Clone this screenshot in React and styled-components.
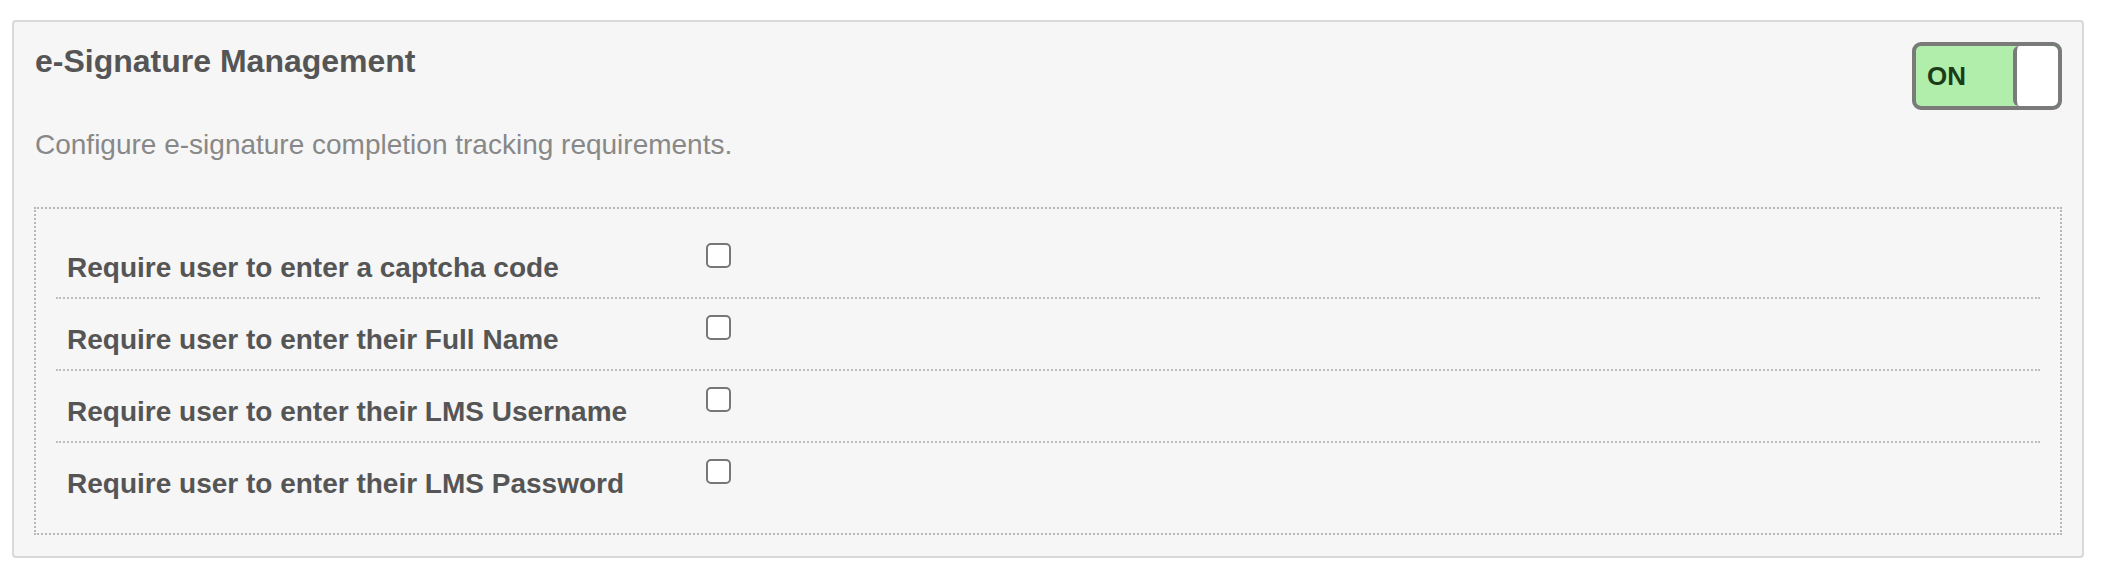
import React, { useState } from "react";
import styled, { createGlobalStyle } from "styled-components";

const GlobalStyle = createGlobalStyle`
  html, body {
    margin: 0;
    padding: 0;
    background: #ffffff;
  }
  body {
    font-family: "Liberation Sans", Arial, Helvetica, sans-serif;
  }
  * { box-sizing: border-box; }
`;

const Page = styled.div`
  padding: 20px 0 0 12px;
`;

const Panel = styled.section`
  width: 2072px;
  height: 538px;
  background: #f6f6f6;
  border: 2px solid #d9d9d9;
  border-radius: 4px;
  padding: 20px;
  display: flex;
  flex-direction: column;
`;

const Header = styled.div`
  display: flex;
  justify-content: space-between;
  align-items: flex-start;
`;

const Title = styled.h2`
  margin: 1px 0 0 1px;
  font-size: 32px;
  line-height: 36px;
  font-weight: 700;
  color: #555555;
`;

const Toggle = styled.button`
  width: 150px;
  height: 68px;
  padding: 0;
  border: 4px solid #7a7a7a;
  border-radius: 9px;
  background: ${(p) => (p.$on ? "#b1eeab" : "#e4e4e4")};
  display: flex;
  align-items: stretch;
  cursor: pointer;
  font-family: inherit;
  overflow: hidden;
`;

const ToggleText = styled.span`
  flex: 1;
  display: flex;
  align-items: center;
  padding-left: 11px;
  font-size: 26px;
  font-weight: 700;
  color: #1b3c19;
`;

const Knob = styled.span`
  width: 45px;
  background: #ffffff;
  border-left: 4px solid #7a7a7a;
  border-radius: 6px;
`;

const Description = styled.p`
  margin: 19px 0 0 1px;
  font-size: 28px;
  line-height: 32px;
  color: #888888;
`;

const OptionsBox = styled.div`
  margin-top: 46px;
  border: 2px dotted #b8b8b8;
  padding: 18px 20px;
`;

const Row = styled.div`
  display: grid;
  grid-template-columns: 650px 1fr;
  align-items: start;
  height: 72px;
  border-bottom: ${(p) => (p.$last ? "none" : "2px dotted #bdbdbd")};
`;

const Label = styled.label`
  padding: 25px 0 0 11px;
  font-size: 28px;
  line-height: 32px;
  font-weight: 700;
  color: #555555;
`;

const Checkbox = styled.input.attrs({ type: "checkbox" })`
  appearance: none;
  -webkit-appearance: none;
  margin: 16px 0 0 0;
  width: 25px;
  height: 25px;
  border: 2px solid #777777;
  border-radius: 5px;
  background: #ffffff;
  cursor: pointer;
  position: relative;

  &:checked::after {
    content: "";
    position: absolute;
    left: 6px;
    top: 1px;
    width: 7px;
    height: 13px;
    border: solid #555;
    border-width: 0 3px 3px 0;
    transform: rotate(45deg);
  }
`;

const options = [
  "Require user to enter a captcha code",
  "Require user to enter their Full Name",
  "Require user to enter their LMS Username",
  "Require user to enter their LMS Password",
];

export default function App() {
  const [on, setOn] = useState(true);
  const [checked, setChecked] = useState(options.map(() => false));

  return (
    <Page>
      <GlobalStyle />
      <Panel>
        <Header>
          <Title>e-Signature Management</Title>
          <Toggle $on={on} onClick={() => setOn(!on)}>
            <ToggleText>{on ? "ON" : "OFF"}</ToggleText>
            <Knob />
          </Toggle>
        </Header>
        <Description>Configure e-signature completion tracking requirements.</Description>
        <OptionsBox>
          {options.map((text, i) => (
            <Row key={text} $last={i === options.length - 1}>
              <Label htmlFor={`opt-${i}`}>{text}</Label>
              <Checkbox
                id={`opt-${i}`}
                checked={checked[i]}
                onChange={() =>
                  setChecked(checked.map((c, j) => (j === i ? !c : c)))
                }
              />
            </Row>
          ))}
        </OptionsBox>
      </Panel>
    </Page>
  );
}
